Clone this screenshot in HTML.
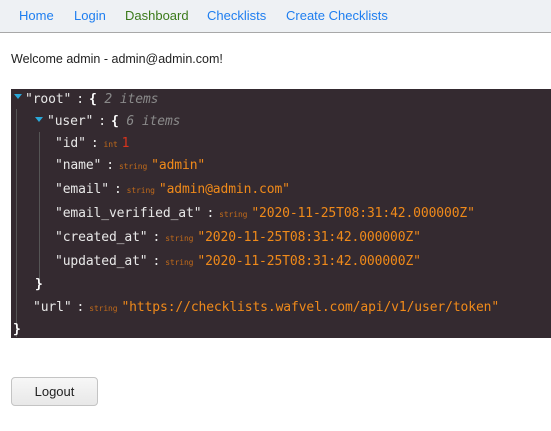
<!DOCTYPE html>
<html><head><style>
body{margin:0;width:551px;height:431px;background:#fff;font-family:"Liberation Sans",sans-serif;position:relative;overflow:hidden}
.nav{position:absolute;left:0;top:0;width:551px;height:32px;background:#eef1f4;border-bottom:1px solid #a8a8a8}
.nav a{position:absolute;top:8px;font-size:13px;color:#1e7ef0;text-decoration:none}
.welcome{position:absolute;left:11px;top:52px;font-size:12.5px;color:#222}
.box{position:absolute;left:11px;top:89px;width:540px;height:249px;background:#342a30}
.r{position:absolute;font-family:"DejaVu Sans Mono",monospace;font-size:13px;white-space:pre;color:#e8e8e8;line-height:16px;letter-spacing:-0.12px}
.r i{font-style:normal;margin:0 5px}
.b{color:#fff;font-weight:bold}
.c{color:#8a8a8a;font-style:italic}
.t{font-size:8px;color:#c06a1a;margin-right:4px}
.s{color:#f08a1a}
.n{color:#d9331c}
.tri{position:absolute;width:0;height:0;border-left:4px solid transparent;border-right:4px solid transparent;border-top:5px solid #2aa8d8}
.g{position:absolute;width:1px;background:#555}
.btn{position:absolute;left:11px;top:377px;width:85px;height:27px;border:1px solid #c4c4c4;border-radius:4px;background:linear-gradient(#f7f7f7,#e8e8e8);font-size:13px;color:#222;text-align:center;line-height:27px}
</style></head><body>
<div class="nav">
<a style="left:19px">Home</a><a style="left:74px">Login</a><a style="left:125px;color:#3b7a1a">Dashboard</a><a style="left:207px">Checklists</a><a style="left:286px">Create Checklists</a>
</div>
<div class="welcome">Welcome admin - admin@admin.com!</div>
<div class="box">
<div class="g" style="left:5px;top:20px;height:228px"></div>
<div class="g" style="left:28px;top:43px;height:147px"></div>
<div class="tri" style="left:3px;top:5px"></div>
<div class="r" style="left:14px;top:3px">"root"<i>:</i><span class="b">{</span> <span class="c">2 items</span></div>
<div class="tri" style="left:24px;top:28px"></div>
<div class="r" style="left:36px;top:25px">"user"<i>:</i><span class="b">{</span> <span class="c">6 items</span></div>
<div class="r" style="left:44px;top:47px">"id"<i>:</i><span class="t">int</span><span class="n">1</span></div>
<div class="r" style="left:44px;top:69px">"name"<i>:</i><span class="t">string</span><span class="s">"admin"</span></div>
<div class="r" style="left:44px;top:93px">"email"<i>:</i><span class="t">string</span><span class="s">"admin@admin.com"</span></div>
<div class="r" style="left:44px;top:117px">"email_verified_at"<i>:</i><span class="t">string</span><span class="s">"2020-11-25T08:31:42.000000Z"</span></div>
<div class="r" style="left:44px;top:141px">"created_at"<i>:</i><span class="t">string</span><span class="s">"2020-11-25T08:31:42.000000Z"</span></div>
<div class="r" style="left:44px;top:165px">"updated_at"<i>:</i><span class="t">string</span><span class="s">"2020-11-25T08:31:42.000000Z"</span></div>
<div class="r b" style="left:24px;top:188px">}</div>
<div class="r" style="left:22px;top:211px">"url"<i>:</i><span class="t">string</span><span class="s">"https://checklists.wafvel.com/api/v1/user/token"</span></div>
<div class="r b" style="left:2px;top:233px">}</div>
</div>
<div class="btn">Logout</div>
</body></html>
